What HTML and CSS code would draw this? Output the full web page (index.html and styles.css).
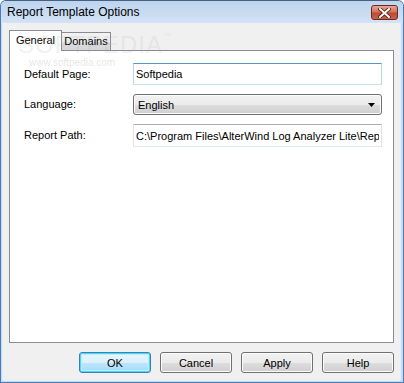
FILE: index.html
```html
<!DOCTYPE html>
<html>
<head>
    <link rel="stylesheet" href="styles.css">
</head>
<body>
    <div class="window">
        <div class="titlebar">
            <span class="title">Report Template Options</span>
            <div class="close-btn">
                <svg width="13" height="10" viewBox="0 0 13 10">
                    <path d="M2 1 L11 9 M11 1 L2 9" stroke="#5a1a10" stroke-width="3.6" stroke-linecap="square"/>
                    <path d="M2 1 L11 9 M11 1 L2 9" stroke="#ffffff" stroke-width="2" stroke-linecap="square"/>
                </svg>
            </div>
        </div>
        <div class="client">
            <div class="tabs">
                <div class="tab active">General</div>
                <div class="tab">Domains</div>
            </div>
            <div class="panel">
                <div class="form">
                    <label class="field-label">Default Page:</label>
                    <input class="edit hot" type="text" value="Softpedia">

                    <label class="field-label">Language:</label>
                    <div class="combo">
                        <span>English</span>
                        <svg width="7" height="4" viewBox="0 0 7 4"><path d="M0 0 H7 L3.5 4 Z" fill="#000"/></svg>
                    </div>

                    <label class="field-label">Report Path:</label>
                    <input class="edit" type="text" value="C:\Program Files\AlterWind Log Analyzer Lite\Reports\">
                </div>
            </div>
            <div class="buttons">
                <button class="default">OK</button>
                <button>Cancel</button>
                <button>Apply</button>
                <button>Help</button>
            </div>
        </div>

        <!-- watermark -->
        <div class="wm-big">SOFTPEDIA<sup>™</sup></div>
        <div class="wm-small">www.softpedia.com</div>
    </div>
</body>
</html>
```

FILE: styles.css
```css
body {
    margin: 0;
    font-family: 'Liberation Sans', Arial, sans-serif;
    font-size: 11px;
    color: #000;
    background: #ffffff;
}

.window {
    position: relative;
    width: 404px;
    height: 383px;
    box-sizing: border-box;
    display: flex;
    flex-direction: column;
    border: 1px solid #4a7db8;
    border-top-color: #46607e;
    border-radius: 6px 6px 0 0;
    background: #c6daf1;
    overflow: hidden;
}

.titlebar {
    height: 22px;
    display: flex;
    align-items: flex-start;
    justify-content: space-between;
    background: linear-gradient(to bottom, #bed4ef, #c9dcf2 60%, #d4e3f5);
}

.title {
    font-size: 12px;
    margin: 4px 0 0 6px;
    color: #000;
}

.close-btn {
    width: 25px;
    height: 13px;
    margin: 4px 5px 0 0;
    border: 1px solid #6b2b20;
    border-radius: 3px;
    background: linear-gradient(to bottom, #e8a696, #d0735f 45%, #bd4a32 55%, #c8624a);
    display: flex;
    align-items: center;
    justify-content: center;
}

.client {
    flex: 1;
    margin: 0 3px 2px 2px;
    padding: 7px 6px 7px 6px;
    background: #f0f0f0;
    display: flex;
    flex-direction: column;
    box-shadow: -1px 0 0 #e6eef8, 1px 0 0 #e6eef8, 0 1px 0 #e6eef8;
}

.tabs {
    display: flex;
    height: 21px;
    margin-bottom: -1px;
    position: relative;
    z-index: 1;
}

.tab {
    box-sizing: border-box;
    height: 18px;
    margin-top: 2px;
    width: 49px;
    padding-top: 2px;
    text-align: center;
    border: 1px solid #898c95;
    border-left: none;
    border-bottom: none;
    background: linear-gradient(to bottom, #f3f3f3, #ebebeb 50%, #dedede 51%, #d6d6d6);
}

.tab.active {
    width: 53px;
    height: 21px;
    margin-top: 0;
    padding-top: 3px;
    border-left: 1px solid #898c95;
    background: #ffffff;
}

.panel {
    flex: 1;
    background: #ffffff;
    border: 1px solid #898c95;
    padding: 12px 11px 0 14px;
}

.form {
    display: grid;
    grid-template-columns: 109px 249px;
    grid-template-rows: 22px 21px 23px;
    row-gap: 9px;
    align-items: center;
}

.field-label {
    padding-bottom: 1px;
}

.edit {
    box-sizing: border-box;
    width: 249px;
    height: 100%;
    margin: 0;
    padding: 0 2px;
    font-family: 'Liberation Sans', Arial, sans-serif;
    font-size: 11px;
    color: #000;
    background: #ffffff;
    border: 1px solid #e2e3ea;
    border-top-color: #abadb3;
    border-bottom-color: #e3e9ef;
    outline: none;
}

.edit.hot {
    border-color: #b7d5ea;
    border-top-color: #5794bf;
    border-bottom-color: #c7e2f1;
}

.combo {
    box-sizing: border-box;
    height: 21px;
    display: flex;
    align-items: center;
    justify-content: space-between;
    padding: 0 6px 0 4px;
    border: 1px solid #707070;
    border-radius: 3px;
    background: linear-gradient(to bottom, #f2f2f2, #ebebeb 50%, #dddddd 51%, #cfcfcf);
    box-shadow: inset 0 0 0 1px #fcfcfc;
}

.buttons {
    display: flex;
    justify-content: flex-end;
    gap: 9px;
    margin-top: 9px;
}

button {
    box-sizing: border-box;
    width: 72px;
    height: 21px;
    padding: 0;
    font-family: 'Liberation Sans', Arial, sans-serif;
    font-size: 11px;
    color: #000;
    border: 1px solid #707070;
    border-radius: 3px;
    background: linear-gradient(to bottom, #f2f2f2, #ebebeb 50%, #dddddd 51%, #cfcfcf);
    box-shadow: inset 0 0 0 1px #fcfcfc;
}

button.default {
    border-color: #3c7fb1;
    box-shadow: inset 0 0 0 1px #48d8fb, inset 0 0 0 2px #bbeefc;
    background: linear-gradient(to bottom, #eaf6fd, #d9f0fc 50%, #bee6fd 51%, #a7d9f5);
}

.wm-big {
    position: absolute;
    left: 17px;
    top: 30px;
    font-size: 24px;
    letter-spacing: 1px;
    color: rgba(170, 170, 170, 0.18);
    pointer-events: none;
    z-index: 2;
}

.wm-big sup {
    font-size: 8px;
    vertical-align: top;
}

.wm-small {
    position: absolute;
    left: 28px;
    top: 56px;
    font-size: 10px;
    color: rgba(170, 170, 170, 0.3);
    pointer-events: none;
    z-index: 2;
}
```
